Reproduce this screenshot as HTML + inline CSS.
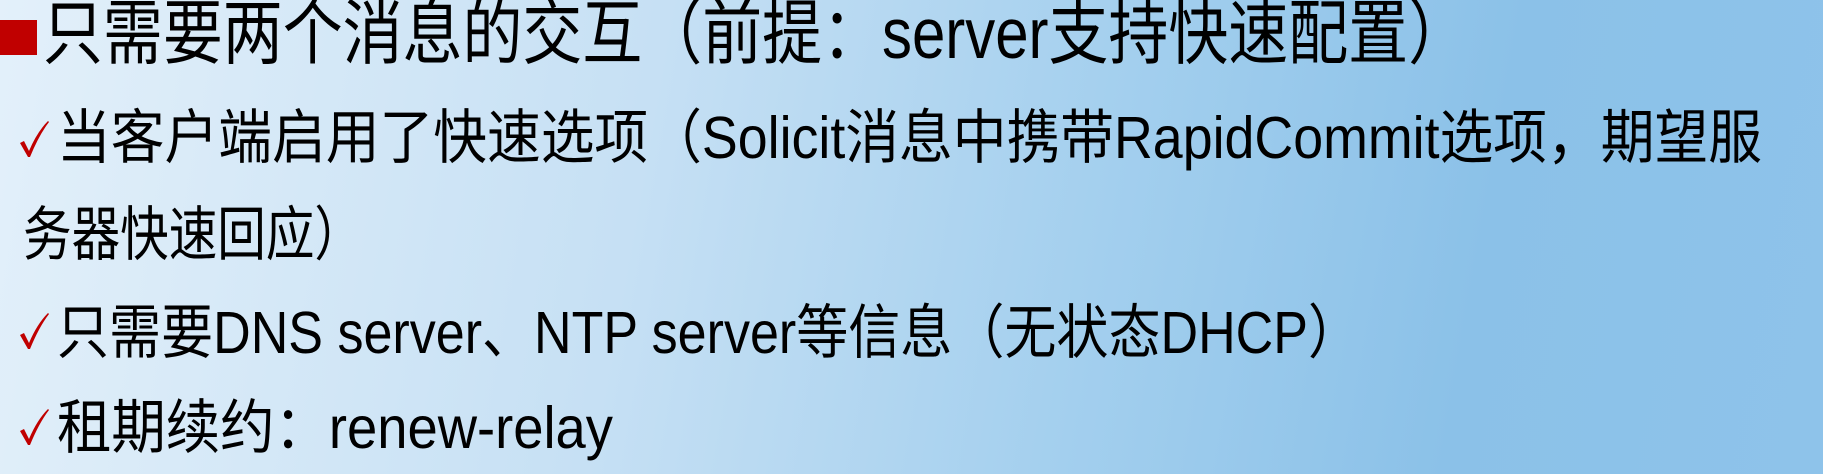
<!DOCTYPE html>
<html><head><meta charset="utf-8">
<style>
html,body{margin:0;padding:0}
body{width:1823px;height:474px;overflow:hidden;position:relative;
background:linear-gradient(100deg,#e3f0fa 0%,#c6e0f4 35%,#a3cfee 60%,#8bc1e8 80%,#8ec3ea 100%);
font-family:"Liberation Sans","Noto Sans CJK SC",sans-serif;color:#000}
.l{position:absolute;white-space:nowrap;transform-origin:0 0;line-height:1}
.sq{position:absolute;left:0;top:20px;width:37px;height:35px;background:#c00000}
.ck{position:absolute;left:18px;width:38px;height:38px}
</style></head><body>
<div class="sq"></div>
<div class="l" data-w="1425" style="left:43px;top:-1px;font-size:71px">只需要两个消息的交互（前提：server支持快速配置）</div>
<svg class="ck" style="top:120px" viewBox="0 0 38 38"><path d="M2 23 L6 21 L11 31 Q19 12 30 1 L31 2 Q21 15 12 37 L10 37 Z" fill="#c00000"/></svg>
<div class="l" data-w="1705" style="left:57px;top:109px;font-size:59px">当客户端启用了快速选项（Solicit消息中携带RapidCommit选项，期望服</div>
<div class="l" data-w="340" style="left:23px;top:206px;font-size:59px">务器快速回应）</div>
<svg class="ck" style="top:312px" viewBox="0 0 38 38"><path d="M2 23 L6 21 L11 31 Q19 12 30 1 L31 2 Q21 15 12 37 L10 37 Z" fill="#c00000"/></svg>
<div class="l" data-w="1303" style="left:57px;top:304px;font-size:59px">只需要DNS server、NTP server等信息（无状态DHCP）</div>
<svg class="ck" style="top:408px" viewBox="0 0 38 38"><path d="M2 23 L6 21 L11 31 Q19 12 30 1 L31 2 Q21 15 12 37 L10 37 Z" fill="#c00000"/></svg>
<div class="l" data-w="556" style="left:57px;top:399px;font-size:59px">租期续约：renew-relay</div>
<script>
document.querySelectorAll('.l').forEach(function(e){
 var w=e.getBoundingClientRect().width, t=+e.getAttribute('data-w');
 if(w>0) e.style.transform='scaleX('+(t/w)+')';
});
</script>
</body></html>
